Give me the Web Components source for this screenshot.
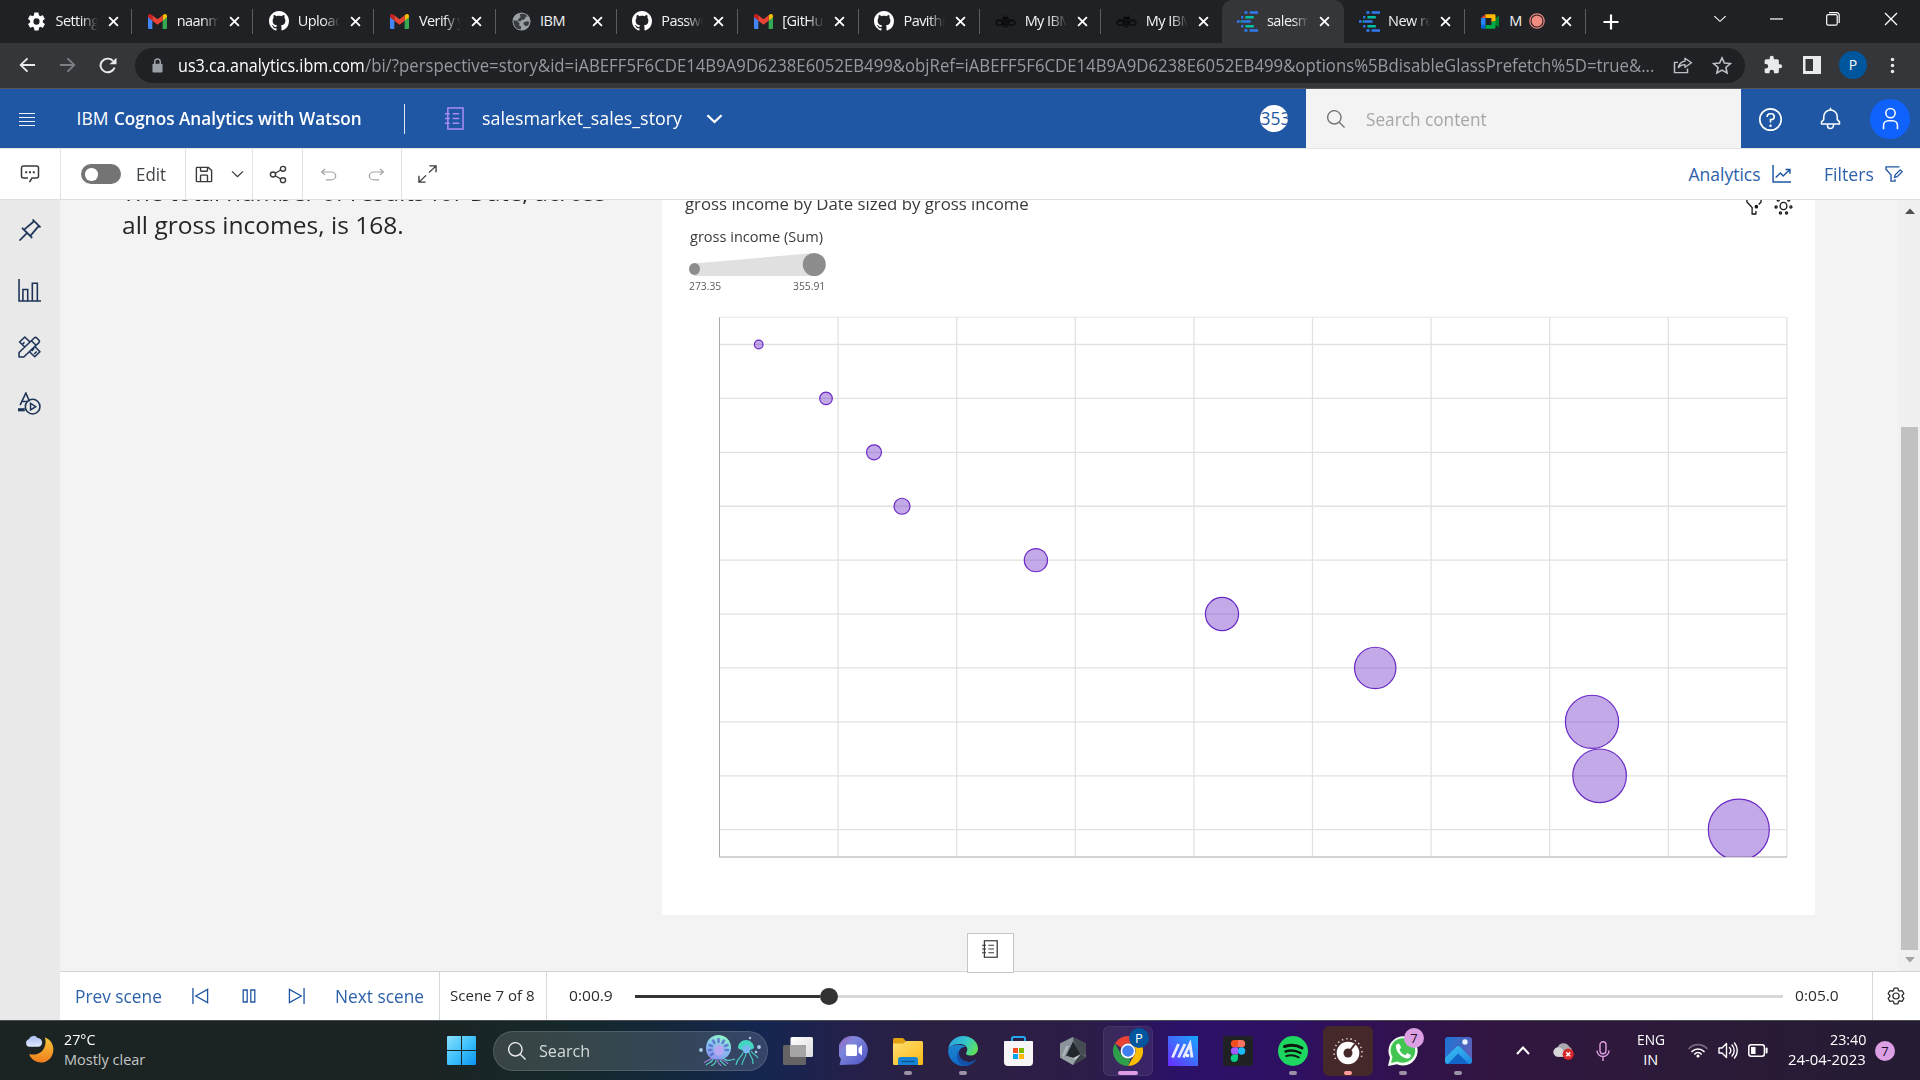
<!DOCTYPE html>
<html lang="en">
<head>
<meta charset="utf-8">
<title>salesmarket_sales_story</title>
<style>
html,body{margin:0;padding:0;width:1920px;height:1080px;overflow:hidden;background:#f3f3f3}
</style>
</head>
<body>
<app-desktop></app-desktop>
<script>
const PLEX='"Open Sans","Noto Sans",sans-serif';
const SEGOE='"Open Sans","Noto Sans",sans-serif';

const ICONS={
gear:['2 1.500 20 21','<path fill="currentColor" fill-rule="evenodd" d="M19.4 13c0-.3.1-.6.1-1s0-.7-.1-1l2.1-1.6c.2-.2.3-.4.1-.7l-2-3.4c-.1-.2-.4-.3-.6-.2l-2.5 1c-.5-.4-1.1-.7-1.7-1l-.4-2.6c0-.3-.2-.5-.5-.5h-4c-.3 0-.5.2-.5.4l-.4 2.7c-.6.2-1.1.6-1.7 1l-2.5-1c-.2-.1-.5 0-.6.2l-2 3.4c-.1.2-.1.5.1.7L4.500 11c0 .3-.1.6-.1 1s0 .7.1 1l-2.1 1.6c-.2.2-.3.4-.1.7l2 3.4c.1.2.4.3.6.2l2.5-1c.5.4 1.1.7 1.7 1l.4 2.6c0 .3.2.5.5.5h4c.3 0 .5-.2.5-.4l.4-2.7c.6-.2 1.1-.6 1.7-1l2.5 1c.2.1.5 0 .6-.2l2-3.4c.1-.2.1-.5-.1-.7zM12 15.6a3.6 3.6 0 1 1 0-7.200a3.6 3.6 0 0 1 0 7.200z"/>'],
gmail:['0 0 24 18','<path fill="#4285f4" d="M0 3v13.500C0 17.400.7 18 1.600 18H5.500V7z"/><path fill="#34a853" d="M24 3v13.500c0 .9-.7 1.500-1.600 1.500H18.500V7z"/><path fill="#fbbc04" d="M18.500 1.500V8L24 4V2.500c0-2.200-2.500-3.200-4.200-2z"/><path fill="#c5221f" d="M5.500 1.500V8L0 4V2.500C0 .3 2.500-.7 4.200.500z"/><path fill="#ea4335" d="M5.500 8V1.500L12 6.400l6.500-4.900V8L12 12.900z"/>'],
github:['0 0 16 16','<path fill="#fff" d="M8 0C3.580 0 0 3.580 0 8c0 3.540 2.290 6.530 5.470 7.590.4.070.550-.170.550-.380 0-.190-.010-.820-.010-1.490-2.010.370-2.530-.490-2.690-.940-.090-.230-.480-.940-.820-1.130-.280-.150-.680-.520-.010-.530.630-.010 1.080.580 1.230.820.720 1.210 1.870.870 2.330.660.070-.520.280-.870.510-1.070-1.780-.200-3.640-.890-3.640-3.950 0-.870.310-1.590.820-2.150-.080-.200-.360-1.020.080-2.120 0 0 .670-.210 2.200.820.640-.180 1.320-.270 2-.270s1.360.090 2 .270c1.530-1.040 2.200-.820 2.200-.820.440 1.100.160 1.920.080 2.120.510.560.820 1.270.820 2.150 0 3.070-1.870 3.750-3.650 3.950.290.250.540.730.540 1.480 0 1.070-.010 1.930-.010 2.200 0 .210.150.460.550.380A8.010 8.010 0 0 0 16 8c0-4.420-3.580-8-8-8z"/>'],
globe:['0 0 20 20','<circle cx="10" cy="10" r="9.500" fill="#9aa0a6"/><path fill="#3a3c40" d="M2 8.500l4 1.200 2 2.500-.5 2 2.300 1.300-.8 3C5 18.200 1.800 15 1.600 10zM8 2l5-.2 3.500 2.700-2 .6-1.200 2.400-3 .8-1.800 1.700-3-1L8 6.300l1-1.500zM12 11l4-1.200 2.200.8-1 3.400-2.700.9-2-1.600z"/>'],
bee:['0 0 24 20','<g fill="none" stroke="#08090a" stroke-width="1.500"><ellipse cx="5" cy="12" rx="3.800" ry="3"/><ellipse cx="19" cy="12" rx="3.800" ry="3"/></g><g fill="#08090a"><rect x="8.500" y="4" width="7" height="3" rx="1"/><rect x="2" y="7.200" width="20" height="1.500"/><rect x="8.500" y="9.500" width="7" height="2"/><rect x="8.500" y="12.500" width="7" height="2"/><rect x="9.500" y="15.500" width="5" height="2"/><path d="M9 0l2 4-1.200.2zM15 0l-2 4 1.200.2z"/></g>'],
cognos:['0 0 20 22','<g stroke-width="2.600"><path stroke="#2f7bf0" d="M7 1.500h3M12 1.500h8M4 6.500h2M0 11h2.500M5 11h8M4 16h2M7 20.500h3M12 20.500h8"/><path stroke="#00bfa5" d="M8 6.500h8M8 16h8M3.500 11h1.200"/></g>'],
meet:['0 0 20 20','<path fill="#00832d" d="M14 7l5-4v14l-5-4z"/><path fill="#0066da" d="M1 14h4.500v4.500H2.500A1.500 1.500 0 0 1 1 17z"/><path fill="#2684fc" d="M1 6h4.500v8H1z"/><path fill="#e94235" d="M5.500 1.500V6H1z"/><path fill="#ffba00" d="M5.500 1.500H14A1.500 1.500 0 0 1 15.500 3v6l-4 1.500V6h-6z"/><path fill="#00ac47" d="M5.500 14h6v-3.500l4-1V17a1.500 1.500 0 0 1-1.500 1.500H5.500z"/>'],
rec:['0 0 16 16','<circle cx="8" cy="8" r="7.200" fill="none" stroke="#f28b82" stroke-width="1.200"/><circle cx="8" cy="8" r="5.500" fill="#f28b82"/>'],
x:['0 0 12 12','<path d="M1.200 1.200l9.600 9.600M10.800 1.200l-9.600 9.600" stroke="currentColor" stroke-width="2"/>'],
xthin:['0 0 14 14','<path d="M1 1l12 12M13 1L1 13" stroke="currentColor" stroke-width="1.300"/>'],
plus:['0 0 16 16','<path d="M8 .5v15M.5 8h15" stroke="currentColor" stroke-width="2.200"/>'],
vthin:['0 0 16 10','<path d="M1.500 1.500L8 8l6.500-6.500" fill="none" stroke="currentColor" stroke-width="1.200"/>'],
min:['0 0 14 14','<path d="M0 7.500h14" stroke="currentColor" stroke-width="1.300"/>'],
max:['0 0 14 14','<rect x=".7" y="2.700" width="10.500" height="10.500" rx="1.500" fill="none" stroke="currentColor" stroke-width="1.200"/><path d="M3 .7h7.800a2.400 2.400 0 0 1 2.400 2.400V11" fill="none" stroke="currentColor" stroke-width="1.200"/>'],
back:['0 0 18 18','<path d="M17 9H2M9 1.500L1.800 9 9 16.500" fill="none" stroke="currentColor" stroke-width="2"/>'],
fwd:['0 0 18 18','<path d="M1 9h15M9 1.500L16.200 9 9 16.500" fill="none" stroke="currentColor" stroke-width="2"/>'],
reload:['0 0 18 18','<path d="M15.600 11.200A7.200 7.200 0 1 1 14 4" fill="none" stroke="currentColor" stroke-width="2"/><path d="M17.500.800v7h-7z" fill="currentColor"/>'],
lock:['0 0 12 16','<rect x=".5" y="6" width="11" height="9.500" rx="1.200" fill="#9aa0a6"/><path d="M3 7V4a3 3 0 0 1 6 0v3" fill="none" stroke="#9aa0a6" stroke-width="1.600"/>'],
pageshare:['0 0 20 20','<path d="M5 7H1.500v11.500h13V14" fill="none" stroke="currentColor" stroke-width="1.500"/><path d="M12 2.500l6.500 5L12 12.500V9.700c-3 0-5 .8-6.700 3.300.6-4 3-6.800 6.700-7.400z" fill="none" stroke="currentColor" stroke-width="1.400" stroke-linejoin="round"/>'],
star:['0 0 20 20','<path d="M10 2l2.400 5.400 5.900.6-4.400 4 1.200 5.800L10 14.800l-5.100 3L6.100 12 1.700 8l5.900-.6z" fill="none" stroke="currentColor" stroke-width="1.600"/>'],
puzzle:['0 0 24 24','<path fill="currentColor" d="M20.500 11H19V7a2 2 0 0 0-2-2h-4V3.500a2.500 2.500 0 0 0-5 0V5H4a2 2 0 0 0-2 2v3.800h1.500a2.700 2.700 0 0 1 0 5.400H2V20c0 1.100.9 2 2 2h3.800v-1.500a2.700 2.700 0 0 1 5.400 0V22H17a2 2 0 0 0 2-2v-4h1.500a2.500 2.500 0 0 0 0-5z"/>'],
panel:['0 0 18 18','<path fill="currentColor" fill-rule="evenodd" d="M0 0h18v18H0zM2.500 3v12H10V3z"/>'],
dots:['0 0 6 20','<g fill="currentColor"><circle cx="3" cy="3" r="2.100"/><circle cx="3" cy="10" r="2.100"/><circle cx="3" cy="17" r="2.100"/></g>'],
menu:['0 0 16 14','<path d="M0 1.500h16M0 5.500h16M0 9.500h16M0 13.500h16" stroke="#f0f4fa" stroke-width="1.100"/>'],
book:['0 0 20 24','<g fill="none" stroke="currentColor" stroke-width="1.600"><rect x="3" y="1" width="16" height="22"/><path d="M0 7h5M0 12h5M0 17h5M8 7h7M8 12h7M8 17h7"/></g>'],
chev:['5 9 22 14','<path fill="currentColor" d="M16 22 6 12l1.400-1.400 8.600 8.600 8.600-8.600L26 12z"/>'],
chevb:['0 0 18 12','<path d="M1.500 1.500L9 9.500l7.500-8" fill="none" stroke="currentColor" stroke-width="2.400"/>'],
search:['2 2 27 27','<path fill="currentColor" d="M29 27.586l-7.552-7.552a11.018 11.018 0 1 0-1.414 1.414L27.586 29zM4 13a9 9 0 1 1 9 9 9.010 9.010 0 0 1-9-9z"/>'],
help:['2 2 28 28','<circle cx="16" cy="16" r="13" fill="none" stroke="currentColor" stroke-width="2"/><circle cx="16" cy="23.500" r="1.500" fill="currentColor"/><path fill="currentColor" d="M17 8h-1.500a4.490 4.490 0 0 0-4.500 4.500v.5h2v-.5a2.500 2.500 0 0 1 2.500-2.500H17a2.500 2.500 0 0 1 0 5h-2v4.500h2V17a4.500 4.500 0 0 0 0-9z"/>'],
bell:['2 0 28 31','<path fill="currentColor" d="M28.707 19.293L26 16.586V13a10.014 10.014 0 0 0-9-9.950V1h-2v2.050A10.014 10.014 0 0 0 6 13v3.586l-2.707 2.707A1 1 0 0 0 3 20v3a1 1 0 0 0 1 1h7v.777a5.152 5.152 0 0 0 4.500 5.199A5.006 5.006 0 0 0 21 25v-1h7a1 1 0 0 0 1-1v-3a1 1 0 0 0-.293-.707zM19 25a3 3 0 0 1-6 0v-1h6zm8-3H5v-1.586l2.707-2.707A1 1 0 0 0 8 17v-4a8 8 0 0 1 16 0v4a1 1 0 0 0 .293.707L27 20.414z"/>'],
user:['5 1 22 30','<path fill="currentColor" d="M16 4a5 5 0 1 1-5 5 5 5 0 0 1 5-5m0-2a7 7 0 1 0 7 7 7 7 0 0 0-7-7zM26 30h-2v-5a5 5 0 0 0-5-5h-6a5 5 0 0 0-5 5v5H6v-5a7 7 0 0 1 7-7h6a7 7 0 0 1 7 7z"/>'],
chat:['0 0 20 18','<path d="M9.500 17l2.500-4h4.500a2 2 0 0 0 2-2V3a2 2 0 0 0-2-2h-13a2 2 0 0 0-2 2v8a2 2 0 0 0 2 2H8" fill="none" stroke="currentColor" stroke-width="1.500"/><path d="M5.200 6.200h2v2h-2zM9 6.200h2v2H9zM12.800 6.200h2v2h-2z" fill="currentColor"/>'],
save:['3 3 26 26','<path fill="currentColor" d="M27.710 9.290l-5-5A1 1 0 0 0 22 4H6a2 2 0 0 0-2 2v20a2 2 0 0 0 2 2h20a2 2 0 0 0 2-2V10a1 1 0 0 0-.290-.710zM12 6h8v4h-8zm8 20h-8v-8h8zm2 0v-8a2 2 0 0 0-2-2h-8a2 2 0 0 0-2 2v8H6V6h4v4a2 2 0 0 0 2 2h8a2 2 0 0 0 2-2V6.410l4 4V26z"/>'],
share:['0 0 18 20','<g fill="none" stroke="currentColor" stroke-width="1.400"><circle cx="4" cy="10" r="2.600"/><circle cx="14" cy="4" r="2.600"/><circle cx="14" cy="16" r="2.600"/><path d="M6.200 8.700l5.600-3.400M6.200 11.300l5.600 3.400"/></g>'],
undo:['3 4 26 23','<path fill="currentColor" d="M20 10H7.815l3.587-3.586L10 5l-6 6 6 6 1.402-1.415L7.818 12H20a6 6 0 0 1 0 12h-8v2h8a8 8 0 0 0 0-16z"/>'],
redo:['3 4 26 23','<path transform="translate(32 0) scale(-1 1)" fill="currentColor" d="M20 10H7.815l3.587-3.586L10 5l-6 6 6 6 1.402-1.415L7.818 12H20a6 6 0 0 1 0 12h-8v2h8a8 8 0 0 0 0-16z"/>'],
expand:['0 0 20 20','<path d="M12 1h7v7M8 19H1v-7M19 1l-7.500 7.500M1 19l7.500-7.500" fill="none" stroke="currentColor" stroke-width="1.400"/>'],
line:['0 0 18 18','<path d="M1 0v17h17M3.500 12.500L8 8l2.500 3L17 4.500M12.800 4.500H17v4.200" fill="none" stroke="currentColor" stroke-width="1.400"/>'],
filter:['0 0 18 17','<path d="M14.500 1H1v2.500l5 6V16h4v-2" fill="none" stroke="currentColor" stroke-width="1.400"/><path d="M9.500 12l.7-2.700 5-5.300 2 2-5 5.300z" fill="none" stroke="currentColor" stroke-width="1.300"/>'],
fdot:['0 0 17 18','<path d="M1 0v5l5.500 5.500V17h4v-3M13.500 7.500L16 5V0" fill="none" stroke="currentColor" stroke-width="1.400"/><circle cx="11" cy="9.700" r="1.900" fill="currentColor"/>'],
burst:['0 0 20 20','<g fill="none" stroke="currentColor"><circle cx="10" cy="10" r="3.600" stroke-width="1.400"/><g stroke-width="1.400"><circle cx="4.500" cy="4" r="1.100"/><circle cx="15.500" cy="4" r="1.100"/><circle cx="2.200" cy="11" r="1.100"/><circle cx="17.800" cy="11" r="1.100"/><circle cx="6.800" cy="17" r="1.100"/><circle cx="13.200" cy="17" r="1.100"/></g></g>'],
pin:['2 2 28 28','<path fill="currentColor" stroke="currentColor" stroke-width=".3" d="M28.586 13.314L30 11.900 20 2l-1.314 1.415 1.186 1.186L8.380 14.322l-1.716-1.715L5.250 14l5.657 5.677L2 28.583 3.410 30l8.911-8.909L18 26.748l1.393-1.414-1.716-1.716 9.724-11.490zM16.260 22.200L9.800 15.740 21.285 6.016l4.700 4.700z"/>'],
bars:['0 0 22 22','<path d="M1 0v21h21M4.700 21V10h4.600v11M13.700 21V4h4.800v17" fill="none" stroke="currentColor" stroke-width="1.500"/>'],
tools:['0 0 22 22','<g fill="none" stroke="currentColor" stroke-width="1.500" stroke-linejoin="round"><path d="M1 21v-4.500L15.500 2a1.800 1.800 0 0 1 2.500 0L20 4.200a1.800 1.800 0 0 1 0 2.400L5.500 21zM12.800 4.800l4.500 4.500M6.500 11L1.500 6 6.500 1l5 5M4 8.500L6.200 6.200M16.500 11l4.500 4.800-5 5-5-5M13 15l2.500-2.500M15.500 18l2.500-2.500"/></g>'],
anim:['0 0 22 22','<path d="M2 12.500L7.500 1 11 9M4.500 9h5" fill="none" stroke="currentColor" stroke-width="1.500"/><path d="M0 15.500h6.500v3H0z" fill="currentColor"/><circle cx="14" cy="14" r="7" fill="none" stroke="currentColor" stroke-width="1.500"/><path d="M12 10.800v6.400l5-3.200z" fill="none" stroke="currentColor" stroke-width="1.400"/>'],
prev:['0 0 18 17','<path d="M1 0v17M16.500 1.500v14L4 8.500z" fill="none" stroke="currentColor" stroke-width="1.400"/>'],
next:['0 0 18 17','<path d="M17 0v17M1.500 1.500v14L14 8.500z" fill="none" stroke="currentColor" stroke-width="1.400"/>'],
pause:['0 0 14 14','<path d="M1.200 1h4v12h-4zM8.800 1h4v12h-4z" fill="none" stroke="currentColor" stroke-width="1.300"/>'],
settings:['1.500 1 29 30','<circle cx="16" cy="16" r="5" fill="none" stroke="currentColor" stroke-width="2"/><path fill="currentColor" d="M27 16.760V16v-.770l1.920-1.680A2 2 0 0 0 29.300 11l-2.360-4a2 2 0 0 0-1.730-1 2 2 0 0 0-.640.100l-2.430.820a11.350 11.350 0 0 0-1.310-.750l-.510-2.520a2 2 0 0 0-2-1.610h-4.680a2 2 0 0 0-2 1.610l-.510 2.520a11.480 11.480 0 0 0-1.320.750L7.430 6.060A2 2 0 0 0 6.790 6a2 2 0 0 0-1.730 1L2.700 11a2 2 0 0 0 .410 2.510L5 15.240v1.530l-1.890 1.680A2 2 0 0 0 2.700 21l2.360 4a2 2 0 0 0 1.730 1 2 2 0 0 0 .640-.100l2.430-.820a11.350 11.350 0 0 0 1.310.750l.510 2.520a2 2 0 0 0 2 1.610h4.720a2 2 0 0 0 2-1.610l.510-2.520a11.480 11.480 0 0 0 1.320-.750l2.420.820a2 2 0 0 0 .640.100 2 2 0 0 0 1.730-1l2.280-4a2 2 0 0 0-.410-2.510zM25.210 24l-3.430-1.160a8.860 8.860 0 0 1-2.710 1.570L18.360 28h-4.720l-.710-3.550a9.360 9.360 0 0 1-2.700-1.570L6.790 24l-2.360-4 2.720-2.400a8.900 8.900 0 0 1 0-3.130L4.430 12l2.360-4 3.430 1.160a8.860 8.860 0 0 1 2.710-1.570L13.640 4h4.720l.710 3.550a9.360 9.360 0 0 1 2.700 1.570L25.210 8l2.360 4-2.720 2.400a8.900 8.900 0 0 1 0 3.130L27.570 20z"/>'],
up:['0 0 10 6','<path d="M0 6l5-5.500L10 6z" fill="#505050"/>'],
down:['0 0 10 6','<path d="M0 0l5 5.500L10 0z" fill="#a3a3a3"/>'],
moon:['0 0 30 30','<defs><linearGradient id="m" x1="0" y1="0" x2="0" y2="1"><stop offset="0" stop-color="#f7c63a"/><stop offset="1" stop-color="#f07d1e"/></linearGradient><linearGradient id="c" x1="0" y1="0" x2="0" y2="1"><stop offset="0" stop-color="#a9bdf0"/><stop offset="1" stop-color="#dfe8ff"/></linearGradient></defs><path fill="url(#m)" d="M20.500 2.500C27 4.500 30.500 11 29 18 27.500 25.500 20 30 13 28 8.500 26.600 5.500 23.500 4.300 19.600 10 21.500 16.500 19.500 19.500 14 21.500 10.300 21.800 6 20.500 2.500z"/><path fill="url(#c)" d="M4.500 12.200a4 4 0 0 1-.5-7.800A5 5 0 0 1 13 3.200a4.500 4.500 0 0 1 4.700 4.500c0 2.500-1.700 4.500-4.200 4.500z"/>'],
win:['0 0 29 29','<defs><linearGradient id="w" x1="0" y1="0" x2="1" y2="1"><stop offset="0" stop-color="#8be0fd"/><stop offset=".5" stop-color="#3fc1fb"/><stop offset="1" stop-color="#0a94f0"/></linearGradient></defs><path fill="url(#w)" d="M1 0h13v14H0V1a1 1 0 0 1 1-1zM15 0h13a1 1 0 0 1 1 1v13H15zM0 15h14v14H1a1 1 0 0 1-1-1zM15 15h14v13a1 1 0 0 1-1 1H15z"/>'],
jelly:['0 0 62 31','<defs><linearGradient id="j" x1=".2" y1="1" x2=".6" y2="0"><stop offset="0" stop-color="#8f8ff0"/><stop offset=".55" stop-color="#86c4ee"/><stop offset="1" stop-color="#8ff8c8"/></linearGradient></defs><path d="M7 13C7 5 13 0 19.500 0S32 5 32 12.500c0 6-4 10.500-9 12h-7C10 23.500 7 19 7 13z" fill="url(#j)"/><g stroke="#5d6fd0" stroke-width="2.600" stroke-linecap="round" opacity=".85"><path d="M19.500 7V4M15.500 8l-1.500-2.500M23.500 8l1.500-2.500M13 11l-2.500-1M26 11l2.500-1M12.500 15h-2.500M26.500 15h2.500M14 18.500l-2 1.500"/></g><ellipse cx="20" cy="15" rx="5" ry="5.500" fill="#b7a8f2"/><g fill="none" stroke="#57d3c7" stroke-width="1.100"><path d="M14 24c-1 4-4 3-7 6M17 25c0 3-3 5-5 6M21 25c1 3 4 3 6 6M24 23c3 3 6 3 12 1"/></g><g fill="none" stroke="#9b83e0" stroke-width="1.100"><path d="M19 25c-1 3 2 4 3 6M13 23c-3 3-6 2-8 5M22 24c2 3 5 1 7 5"/></g><path d="M39 13c0-5 4-8 8-8s8 3 8 8c-2 2-4 1-5 3-2-1-4-1-6 0-1-2-4-1-5-3z" fill="#43d6c0"/><path d="M43 13c2-4 6-4 9 0l-2 5h-5z" fill="#76b7ef"/><g fill="none" stroke="#45cabd" stroke-width="1.200"><path d="M44 17c0 5-6 5-7 13M47 18c0 5-4 7-4 12M50 17c1 5 5 6 4 12M52 16c2 4 5 3 7 7"/></g><g fill="#a8c9e8"><circle cx="2" cy="15" r="1.900"/><circle cx="51" cy="3" r="1.200"/><circle cx="60" cy="12" r="1.900"/><circle cx="57" cy="17" r="1.300"/></g>'],
task:['0 0 30 28','<defs><linearGradient id="t" x1="0" y1="0" x2="1" y2="1"><stop offset="0" stop-color="#fff"/><stop offset="1" stop-color="#dcdcdc"/></linearGradient></defs><rect x="0" y="8" width="23" height="20" rx="1.500" fill="#656363"/><rect x="7.500" y="0" width="22.500" height="20" rx="1.500" fill="url(#t)"/><path d="M7.500 8H23v12H9a1.500 1.500 0 0 1-1.500-1.500z" fill="#a5a5a6"/>'],
teams:['0 0 29 29','<defs><linearGradient id="tc" x1="0" y1="0" x2="1" y2="1"><stop offset="0" stop-color="#9a5fb5"/><stop offset=".35" stop-color="#7d86dc"/><stop offset="1" stop-color="#4d52c4"/></linearGradient></defs><path fill="url(#tc)" d="M14.500 0A14.300 14.300 0 0 1 14.500 28.600L1.500 29a1 1 0 0 1-.7-1.600L2 23A14.300 14.300 0 0 1 14.500 0z"/><rect x="7" y="8.500" width="11" height="11.500" rx="1.500" fill="#fff"/><path fill="#fff" d="M19.500 12l3.500-3v10.500l-3.500-3z"/>'],
folder:['0 0 30 28','<defs><linearGradient id="f" x1="0" y1="0" x2="1" y2="1"><stop offset="0" stop-color="#ffdf70"/><stop offset="1" stop-color="#fbb916"/></linearGradient></defs><path fill="#e1a00f" d="M0 2.500A1.500 1.500 0 0 1 1.500 1H10L12.500 3.500V8H0z"/><path fill="url(#f)" d="M0 6.500h10.500L13 4h15.500A1.500 1.500 0 0 1 30 5.500v21a1.500 1.500 0 0 1-1.500 1.500h-27A1.500 1.500 0 0 1 0 26.500z"/><path fill="#1683d3" d="M5 28v-5.500A2.500 2.500 0 0 1 7.500 20h15a2.500 2.500 0 0 1 2.500 2.500V28z"/><path d="M8.500 24.500h13" stroke="#0a548f" stroke-width="1.300"/>'],
edge:['0 0 30 30','<defs><linearGradient id="e1" x1="0" y1=".2" x2="1" y2=".6"><stop offset="0" stop-color="#2a9fe6"/><stop offset=".55" stop-color="#35c8c8"/><stop offset="1" stop-color="#5fe05a"/></linearGradient><linearGradient id="e2" x1="0" y1="0" x2="0" y2="1"><stop offset="0" stop-color="#1b87d2"/><stop offset="1" stop-color="#1168c4"/></linearGradient></defs><path fill="url(#e1)" d="M.3 13C1.300 5.500 7.500 0 15 0c8.500 0 15 6 15 12.500 0 4.300-3.300 7-7.200 7-3.400 0-4.800-1-4.800-2s1.300-1.500 1.300-4c0-3.400-3.300-5.500-7.300-5.500C6.500 8 2 10 .3 13z"/><path fill="url(#e2)" d="M.1 14C1 11 5 8.700 10.500 8.700c3.500 0 6 .8 7.300 2.300-3.800-.5-7 2.300-7 6 0 5 4.500 9 9.700 9 2.500 0 4.700-.8 6.500-2.100C24.500 27.600 20 30 15.300 30 6.500 30-.3 22.500.1 14z"/><path fill="#1351a8" d="M10.800 14.500c-1.300 5.800 3.700 11.500 9.700 11.500 2.700 0 5-.9 6.800-2.300.5-.3.900.1.500.600C25.300 28 21 30.200 16.500 30 9.500 28 6.800 20 10.800 14.500z"/>'],
store:['0 0 29 30','<path d="M8 6V2.500A1.500 1.500 0 0 1 9.500 1h10A1.500 1.500 0 0 1 21 2.500V6" fill="none" stroke="#22a7ee" stroke-width="2"/><path fill="#f6f6f6" d="M1 5h27a1 1 0 0 1 1 1v20a4 4 0 0 1-4 4H4a4 4 0 0 1-4-4V6a1 1 0 0 1 1-1z"/><path fill="#f25022" d="M9 12h5v5H9z"/><path fill="#7fba00" d="M15 12h5v5h-5z"/><path fill="#00a4ef" d="M9 18h5v5H9z"/><path fill="#ffb900" d="M15 18h5v5h-5z"/>'],
gem:['0 0 26 28','<path fill="#5e666c" d="M13 0l13 6.500V20.500L13 28 0 20.500V6.500z"/><path fill="#8b949a" d="M0 6.500L13 0v6L4 21 0 20.500z"/><path fill="#454d53" d="M13 0l13 6.500V18l-7-1z"/><path fill="#aeb6bb" d="M9 9L4 20l-2-1L6 9z"/><path fill="#23282d" d="M13 4.500l7.500 13L13 21l-6.500-2.500z"/><path fill="#c3c9cd" d="M7 19.500l6.500 1.500 7.500-4-5 6z"/><path fill="#99a1a7" d="M0 20.500L7 19l9 4-3 5z"/><path fill="#3c4348" d="M21 17l5 3.500L13 28l3-5z"/>'],
chrome:['0 0 30 30','<path fill="#ea4335" d="M15 0a15 15 0 0 1 13 7.500H15a7.500 7.500 0 0 0-6.700 4.200L2 7.500A15 15 0 0 1 15 0z"/><path fill="#fbbc04" d="M28 7.500A15 15 0 0 1 15 30l6.500-11.200A7.500 7.500 0 0 0 15 7.500z"/><path fill="#2e9e4a" d="M2 7.500l6.500 11.300A7.500 7.500 0 0 0 18 21.900L15 30A15 15 0 0 1 2 7.500z"/><circle cx="15" cy="15" r="7.400" fill="#fff"/><circle cx="15" cy="15" r="5.800" fill="#3f7ff0"/>'],
ma:['0 0 30 30','<defs><linearGradient id="a" x1="0" y1="1" x2="1" y2="0"><stop offset="0" stop-color="#6a2cff"/><stop offset="1" stop-color="#16a8ff"/></linearGradient></defs><rect width="30" height="30" fill="url(#a)"/><path d="M4.500 21.500L10.500 8M10.500 21.500L17 8M15.500 21.500L22 8l2 13.500" stroke="#e8eaff" stroke-width="2.800" fill="none"/><circle cx="19.500" cy="19.500" r="1.800" fill="#fff"/>'],
figma:['0 0 30 30','<rect width="30" height="30" rx="2" fill="#202124"/><path fill="#f24e1e" d="M11.500 4H15v7.300h-3.500a3.650 3.650 0 0 1 0-7.300z"/><path fill="#ff7262" d="M15 4h3.500a3.650 3.650 0 0 1 0 7.300H15z"/><path fill="#a259ff" d="M11.500 11.300H15v7.300h-3.500a3.650 3.650 0 0 1 0-7.300z"/><circle cx="18.600" cy="15" r="3.650" fill="#1abcfe"/><path fill="#0acf83" d="M11.500 18.600H15v3.700a3.650 3.650 0 1 1-3.500-3.700z"/>'],
spotify:['0 0 30 30','<circle cx="15" cy="15" r="15" fill="#1ed760"/><g fill="none" stroke="#0d1a10" stroke-linecap="round"><path stroke-width="3" d="M6.500 10.500c6-1.800 12.500-1.300 17.500 1.500"/><path stroke-width="2.500" d="M7.500 15.500c5-1.500 10.500-1 15 1.500"/><path stroke-width="2" d="M8.300 20c4-1.200 8.500-.8 12.500 1.300"/></g>'],
timer:['0 0 30 30','<path d="M2.500 23A14 14 0 1 1 27.500 23" fill="none" stroke="#d9d2d2" stroke-width="1.600" stroke-dasharray="1.400 3"/><circle cx="15" cy="17" r="11.300" fill="#fff"/><circle cx="15" cy="17" r="4.500" fill="#45282a"/><path d="M15 17l7-9" stroke="#45282a" stroke-width="2"/><circle cx="15" cy="17" r="2" fill="#45282a"/>'],
whatsapp:['0 0 30 30','<path fill="#f4fff4" d="M0 30l2-8.500A14.600 14.600 0 1 1 9 28.200z"/><path fill="#43c553" d="M3 27l1.500-6A12.300 12.300 0 1 1 9.500 25.500z"/><path fill="#fff" d="M10.200 7.500c-1.500.3-2.500 2-2.200 4 .8 5 5 9.500 10.500 11 2 .4 4.300-.8 4.300-3.200 0-.5-3.300-2.200-3.800-2l-1.600 2c-2.600-.8-5-3-6-5.600l1.500-1.700c.2-.6-1.100-4.400-2.700-4.500z"/>'],
photos:['0 0 27 27','<defs><linearGradient id="p" x1="0" y1="0" x2="1" y2=".3"><stop offset="0" stop-color="#1b76d4"/><stop offset="1" stop-color="#5861ba"/></linearGradient><linearGradient id="p2" x1="0" y1="0" x2="1" y2="1"><stop offset="0" stop-color="#3cc3f5"/><stop offset="1" stop-color="#1d86e0"/></linearGradient></defs><rect width="27" height="27" rx="3" fill="url(#p)"/><path fill="url(#p2)" d="M0 21L11.500 9.800a2.500 2.500 0 0 1 3.500 0L27 22v2a3 3 0 0 1-3 3H3a3 3 0 0 1-3-3z"/><path fill="#1266c9" d="M3 27L13 16.500 24 27z"/><circle cx="20" cy="5" r="2.700" fill="#eaf4ff"/>'],
caret:['0 0 14 9','<path d="M1 8l6-6.500L13 8" fill="none" stroke="currentColor" stroke-width="2"/>'],
cloud:['0 0 20 17','<path fill="#a9a9ae" d="M5 14a4.500 4.500 0 0 1-.5-9A6 6 0 0 1 15.500 4.500 4 4 0 0 1 17 11L14 14z"/><path fill="#d7d7da" d="M5 14a4.500 4.500 0 1 1 3-8l6 6v2z"/><circle cx="14.500" cy="11.500" r="5.300" fill="#d8282c"/><path d="M12.600 9.600l3.800 3.800M16.400 9.600l-3.800 3.800" stroke="#fff" stroke-width="1.400"/>'],
mic:['0 0 14 20','<g fill="none" stroke="#dc9fe0" stroke-width="1.400"><rect x="4" y=".8" width="6" height="12" rx="3"/><path d="M1 9.500a6 6 0 0 0 12 0M7 15.500V20"/></g>'],
wifi:['0 0 20 15','<g fill="none" stroke="#fff" stroke-width="1.700" stroke-linecap="round"><path opacity=".35" d="M1 5.500a12.500 12.500 0 0 1 18 0"/><path d="M4 8.500a8.500 8.500 0 0 1 12 0M6.800 11a4.600 4.600 0 0 1 6.400 0"/></g><circle cx="10" cy="13" r="1.600" fill="#fff"/>'],
vol:['0 0 20 17','<g fill="none" stroke="#fff" stroke-width="1.400" stroke-linejoin="round" stroke-linecap="round"><path d="M1 6h3l4.500-4.500v14L4 11H1zM11.500 5.500a4.500 4.500 0 0 1 0 6M14 3a8 8 0 0 1 0 11M16.500 1a11.500 11.500 0 0 1 0 15"/></g>'],
batt:['0 0 20 13','<rect x=".8" y=".8" width="15.600" height="11.400" rx="2.500" fill="none" stroke="#fff" stroke-width="1.500"/><rect x="3" y="3" width="4.500" height="7" fill="#fff"/><path d="M18.600 4.500v4" stroke="#fff" stroke-width="2" stroke-linecap="round"/>']
};

function define(name,css,html){
  const t=document.createElement('template');
  t.innerHTML='<style>:host{box-sizing:border-box}*{box-sizing:border-box}'+css+'</style>'+html;
  customElements.define(name,class extends HTMLElement{
    connectedCallback(){
      if(this.shadowRoot)return;
      this.attachShadow({mode:'open'}).appendChild(document.importNode(t.content,true));
    }
  });
}

/* Icon drawn from the registry: name, w, h */
customElements.define('ui-icon',class extends HTMLElement{
  connectedCallback(){
    if(this.shadowRoot)return;
    const [vb,body]=ICONS[this.getAttribute('name')];
    const w=this.getAttribute('w'),h=this.getAttribute('h')||w;
    this.attachShadow({mode:'open'}).innerHTML=`<style>:host{display:block;flex:none;width:${w}px;height:${h}px}svg{display:block}</style><svg width="${w}" height="${h}" viewBox="${vb}" preserveAspectRatio="none">${body}</svg>`;
  }
});

/* Single line of text set to an exact advance width */
customElements.define('fit-text',class extends HTMLElement{
  connectedCallback(){
    if(this.shadowRoot)return;
    const w=+this.getAttribute('w'),s=this.getAttribute('s')||16;
    const fam=this.hasAttribute('ui')?SEGOE:PLEX;
    this.attachShadow({mode:'open'}).innerHTML=`<style>:host{display:block;flex:none;width:${w}px;white-space:nowrap;font-family:${fam};font-size:${s}px;line-height:1.3}span{display:inline-block;transform-origin:0 50%;white-space:pre}</style><span><slot></slot></span>`;
    const sp=this.shadowRoot.querySelector('span');
    const fit=()=>{const n=sp.offsetWidth;if(n)sp.style.transform=`scaleX(${w/n})`};
    requestAnimationFrame(fit);
    fit();
  }
});

define('browser-tab',`:host{display:flex;align-items:center;width:121.150px;height:43px;padding:0 0 1px 15.500px;flex:none;color:#e8eaed}
:host([active]){background:#35363a;border-radius:10px 10px 0 0}
.ic{width:20px;display:flex;justify-content:center;margin-right:9px}
.t{width:42px;height:24px;overflow:hidden;white-space:nowrap;font:14.500px/23px ${SEGOE};letter-spacing:-.55px;color:#f1f3f4;-webkit-mask-image:linear-gradient(90deg,#000 60%,transparent);mask-image:linear-gradient(90deg,#000 60%,transparent);display:flex;align-items:center;margin-top:-1px}
:host([full]) .t{-webkit-mask-image:none;mask-image:none}
.c{margin-left:10px;color:#fff}
.s{width:1px;height:25px;background:#5b5d60;margin-left:auto}
:host([nosep]) .s{display:none}`,
`<div class="ic"><slot name="icon"></slot></div><div class="t"><slot></slot></div><ui-icon class="c" name="x" w="11" h="11"></ui-icon><div class="s"></div>`);

const TABS=[['gear',17,19,'Setting'],['gmail',19,15,'naanm'],['github',20,20,'Upload'],['gmail',19,15,'Verify y'],['globe',19,19,'IBM','full'],['github',20,20,'Passwo'],['gmail',19,15,'[GitHub'],['github',20,20,'Pavithr'],['bee',21,15,'My IBM'],['bee',21,15,'My IBM','nosep'],['cognos',21,21,'salesm','active nosep'],['cognos',21,21,'New re'],['meet',20,17,'M','full']];
define('browser-tabs',`:host{display:flex;height:43px;background:#202124;padding-left:11px;align-items:center;color:#fff}.g{flex:1}ui-icon{color:#fff}`,
TABS.map(t=>`<browser-tab ${t[4]||''}><ui-icon slot="icon" name="${t[0]}" w="${t[1]}" h="${t[2]}"></ui-icon>${t[3]}${t[0]=='meet'?'<ui-icon style="margin-left:7px" name="rec" w="16" h="16"></ui-icon>':''}</browser-tab>`).join('')+
`<ui-icon name="plus" w="16" h="16" style="margin-left:17px"></ui-icon><div class="g"></div>
<ui-icon name="vthin" w="14" h="8" style="margin:-6px 43px 0 0"></ui-icon><ui-icon name="min" w="13" h="13" style="margin:-6px 43px 0 0"></ui-icon><ui-icon name="max" w="14" h="14" style="margin:-6px 44px 0 0"></ui-icon><ui-icon name="xthin" w="14" h="14" style="margin:-6px 22px 0 0"></ui-icon>`);

define('address-bar',`:host{display:flex;height:46px;background:#35363a;border-bottom:1px solid #55565a;align-items:center;padding:0 0 1px 19px;color:#e8eaed}
.pill{width:1610px;flex:none;height:35px;border-radius:18px;background:#202124;margin-left:18px;display:flex;align-items:center;padding-left:16.500px;color:#bdc1c6}
.av{width:28px;height:28px;flex:none;border-radius:50%;background:#00569c;display:flex;align-items:center;justify-content:center;color:#fff;font:14px/1 ${SEGOE};margin:0 0 0 18px}
.h{color:#fff}.p{color:#96999d}`,
`<ui-icon name="back" w="17" h="16"></ui-icon><ui-icon name="fwd" w="17" h="16" style="margin-left:23px;color:#7d7f83"></ui-icon><ui-icon name="reload" w="18" h="17" style="margin-left:23px"></ui-icon>
<div class="pill"><ui-icon name="lock" w="11" h="15"></ui-icon><fit-text class="h" ui w="187" s="17.500" style="margin-left:15px">us3.ca.analytics.ibm.com</fit-text><fit-text class="p" ui w="1289" s="17.500">/bi/?perspective=story&amp;id=iABEFF5F6CDE14B9A9D6238E6052EB499&amp;objRef=iABEFF5F6CDE14B9A9D6238E6052EB499&amp;options%5BdisableGlassPrefetch%5D=true&amp;...</fit-text>
<ui-icon name="pageshare" w="20" h="18" style="margin-left:19.500px"></ui-icon><ui-icon name="star" w="20" h="19" style="margin-left:19px"></ui-icon></div>
<ui-icon name="puzzle" w="20" h="20" style="margin-left:18px"></ui-icon><ui-icon name="panel" w="18" h="18" style="margin-left:20px"></ui-icon><div class="av">P</div><ui-icon name="dots" w="5" h="17" style="margin-left:23px"></ui-icon>`);

define('app-header',`:host{display:flex;height:60px;background:#1f57a4;align-items:center;padding:0 0 0 19px;color:#fff;border-bottom:1px solid #e4e4e4}
.d{width:1px;height:30px;flex:none;background:#dfe8f5;margin-left:42px}
.b{width:28px;height:27px;border-radius:50%;background:#fff;overflow:hidden;margin-left:537px;display:flex;align-items:center;color:#1f57a4;padding-left:1px;flex:none}
.s{width:435px;height:59px;flex:none;background:#f3f3f3;color:#727272;display:flex;align-items:center;padding-left:21px;margin-left:18px}
.u{width:40px;height:40px;flex:none;border-radius:50%;background:#0f62fe;display:flex;align-items:center;justify-content:center;margin-left:29.500px}`,
`<ui-icon name="menu" w="16" h="14"></ui-icon><fit-text w="32" s="17.500" style="margin-left:41.500px">IBM</fit-text><fit-text w="248" s="17.500" style="margin-left:5px;font-weight:600">Cognos Analytics with Watson</fit-text><div class="d"></div>
<ui-icon name="book" w="19" h="23" style="margin-left:40px;color:#a98bf5"></ui-icon><fit-text w="200" s="17.500" style="margin:-1px 0 0 18px">salesmarket_sales_story</fit-text><ui-icon name="chevb" w="17" h="10" style="margin-left:24px"></ui-icon>
<div class="b"><fit-text w="30" s="17.500">353</fit-text></div>
<div class="s"><ui-icon name="search" w="18" h="18"></ui-icon><fit-text w="121" s="17.500" style="margin-left:21px;color:#a6a6a6;margin-top:2px">Search content</fit-text></div>
<ui-icon name="help" w="23" h="23" style="margin:1px 0 0 18px"></ui-icon><ui-icon name="bell" w="21" h="23" style="margin-left:38px"></ui-icon><div class="u"><ui-icon name="user" w="17" h="23"></ui-icon></div>`);

define('tool-bar',`:host{display:flex;height:51px;background:#fff;border-bottom:1px solid #e0e0e0;align-items:center;color:#3a3a3a}
.c{display:flex;align-items:center;height:50px;border-right:1px solid #e2e2e2;flex:none}
.tg{width:40px;height:20px;border-radius:10px;background:#747474;padding:4px 0 0 4px;margin-left:20px}.tg i{display:block;width:12.500px;height:12.500px;border-radius:50%;background:#fff}
.l{color:#1f57a4}fit-text.l{color:#2d61a9}.g{flex:1}`,
`<div class="c" style="width:61px;padding-left:19.500px"><ui-icon name="chat" w="20" h="18"></ui-icon></div>
<div class="c" style="width:125px"><div class="tg"><i></i></div><fit-text w="30" s="18" style="margin:1px 0 0 15px;color:#424549">Edit</fit-text></div>
<div class="c" style="width:67px;padding-left:9px"><ui-icon name="save" w="18" h="17"></ui-icon><ui-icon name="chev" w="13" h="8" style="margin-left:18px"></ui-icon></div>
<div class="c" style="width:50px;padding-left:15.500px"><ui-icon name="share" w="18" h="19"></ui-icon></div>
<div class="c" style="width:99px;padding-left:17px;color:#a4a4a4"><ui-icon name="undo" w="17" h="13"></ui-icon><ui-icon name="redo" w="17" h="13" style="margin-left:31px"></ui-icon></div>
<ui-icon name="expand" w="19" h="18" style="margin-left:15.500px"></ui-icon><div class="g"></div>
<fit-text class="l" w="72" s="17.500">Analytics</fit-text><ui-icon class="l" name="line" w="19" h="18" style="margin-left:11px"></ui-icon><fit-text class="l" w="49.500" s="17.500" style="margin-left:33px">Filters</fit-text><ui-icon class="l" name="filter" w="18" h="16" style="margin:0 17px 0 12px"></ui-icon>`);

define('side-rail',`:host{display:flex;flex-direction:column;width:60px;flex:none;background:#e9e9e9;color:#1d3457;padding:19px 0 0 18px}`,
`<ui-icon name="pin" w="22" h="22" style="margin-left:.500px"></ui-icon><ui-icon name="bars" w="23" h="23" style="margin-top:38px"></ui-icon><ui-icon name="tools" w="23" h="22" style="margin-top:34px"></ui-icon><ui-icon name="anim" w="23" h="23" style="margin-top:34px"></ui-icon>`);

const X0=57.500,Y0=117.300;
let grid='',bub='';
for(let i=1;i<=9;i++){const x=(X0+118.600*i).toFixed(2);grid+=`<path d="M${x} ${Y0}V657"/>`}
for(let i=0;i<10;i++){const y=(144.500+53.910*i).toFixed(2);grid+=`<path d="M${X0} ${y}H1125"/>`}
[[758.700,4.300],[826,6.300],[874,7.500],[902,8],[1035.900,11.600],[1222,16.600],[1375.200,20.700],[1592,26.600],[1599.600,26.800],[1738.800,30.500]].forEach((b,i)=>bub+=`<circle cx="${b[0]-662}" cy="${144.500+53.910*i}" r="${b[1]}"/>`);
define('bubble-chart',`:host{display:block;width:1153px;height:715px;background:#fff;flex:none;margin-left:28px}
.w{display:grid;width:1153px;height:715px}.w>*{grid-area:1/1}
.o{display:flex;flex-direction:column;padding:0 0 0 27px;color:#3a3a3a}
.r{display:flex;height:24px}.n{display:flex;justify-content:space-between;width:136px;color:#5a5a5a}`,
`<div class="w"><svg width="1153" height="715" viewBox="0 0 1153 715"><defs><clipPath id="k"><rect x="57" y="110" width="1080" height="547"/></clipPath></defs>
<g stroke="#e2e2e2" stroke-width="1.300" fill="none">${grid}<path d="M${X0} ${Y0}H1125" stroke="#ececec"/></g>
<path d="M57.500 ${Y0}V657" stroke="#a8a8a8"/><path d="M57 657H1125" stroke="#c6c6c6" stroke-width="1.400"/>
<g fill="#6929c4" fill-opacity=".4" stroke="#6929c4" stroke-width="1.200" clip-path="url(#k)">${bub}</g>
<path d="M32 63.500L152 53v23H32z" fill="#e0e0e0"/><ellipse cx="32.500" cy="69" rx="5.500" ry="6" fill="#8d8d8d"/><circle cx="152.300" cy="64.500" r="11.500" fill="#8d8d8d"/></svg>
<div class="o"><div class="r"><fit-text w="343.500" s="16.500" style="margin:-7px 0 0 -4.500px">gross income by Date sized by gross income</fit-text><ui-icon name="fdot" w="16" h="18" style="margin:-3.500px 0 0 717.500px;color:#161616"></ui-icon><ui-icon name="burst" w="19" h="20" style="margin:-4px 0 0 12.500px;color:#161616"></ui-icon></div>
<fit-text w="132.500" s="14.500" style="margin:4px 0 0 .500px">gross income (Sum)</fit-text>
<div class="n" style="margin-top:33px"><fit-text w="32.500" s="10.500">273.35</fit-text><fit-text w="32.500" s="10.500">355.91</fit-text></div></div></div>`);

define('story-view',`:host{display:flex;flex:1;background:#f3f3f3;overflow:hidden;min-width:0}
.l{width:574px;padding:0 0 0 62px;flex:none;color:#262626}
.m{display:flex;flex-direction:column;flex:1}.row{display:flex}
.tab{position:absolute;left:967px;top:933px;width:47px;height:40px;background:#fff;border:1px solid #c6c6c6;display:flex;justify-content:center;padding-top:6px;z-index:2;color:#3a3a3a}
.sb{width:21px;background:#f0f0f0;display:flex;flex-direction:column;align-items:center}
.th{width:17px;height:523px;background:#c1c1c1;margin-top:213px}`,
`<div class="m"><div class="row"><div class="l"><fit-text w="484" s="24.500" style="margin-top:-24px;line-height:32.500px">The total number of results for Date, across</fit-text><fit-text w="281.500" s="24.500" style="line-height:32.500px">all gross incomes, is 168.</fit-text></div><bubble-chart></bubble-chart></div></div>
<div class="tab"><ui-icon name="book" w="16" h="18" style="margin-left:-2px"></ui-icon></div>
<div class="sb"><ui-icon name="up" w="10" h="6" style="margin-top:8px"></ui-icon><div class="th"></div><ui-icon name="down" w="10" h="6" style="margin-top:7px"></ui-icon></div>`);

define('play-bar',`:host{display:flex;height:49px;background:#fff;border-top:1px solid #d4d4d4;align-items:center;color:#1f57a4;padding:0 0 0 15px;flex:none}
.s{width:1px;height:48px;background:#d9d9d9;flex:none}.k{color:#2b2b2b}.l{color:#2d61a9}
.tr{width:1148px;height:18px;margin-left:22px;display:flex;align-items:center;flex:none}
.a{width:185px;height:3px;background:#333}.b{width:18px;height:17px;border-radius:50%;background:#333}.c{flex:1;height:3px;background:#d8d8d8}`,
`<fit-text class="l" w="87" s="17.500">Prev scene</fit-text><ui-icon name="prev" w="17" h="16" style="margin-left:29.500px"></ui-icon><ui-icon name="pause" w="14" h="14" style="margin-left:33px"></ui-icon><ui-icon name="next" w="17" h="16" style="margin-left:32px"></ui-icon><fit-text class="l" w="89" s="17.500" style="margin-left:30px">Next scene</fit-text><div class="s" style="margin-left:15px"></div>
<fit-text class="k" w="85" s="14.500" style="margin:1px 0 0 10.500px">Scene 7 of 8</fit-text><div class="s" style="margin-left:11px"></div><fit-text class="k" w="44" s="14.500" style="margin:1px 0 0 22px">0:00.9</fit-text>
<div class="tr"><div class="a"></div><div class="b"></div><div class="c"></div></div><fit-text class="k" w="44" s="14.500" style="margin:1px 0 0 12px">0:05.0</fit-text><div class="s" style="margin-left:33px"></div><ui-icon class="k" name="settings" w="18" h="18" style="margin-left:14px"></ui-icon>`);

define('task-item',`:host{display:flex;width:55px;height:60px;align-items:center;justify-content:center;flex:none;position:relative}
.p{display:flex;width:50px;height:50px;border-radius:6px;align-items:center;justify-content:center}
:host([hot]) .p{background:rgba(255,255,255,.07);box-shadow:inset 0 0 0 1px rgba(255,255,255,.06)}
:host([warn]) .p{background:#45282a}
.d{position:absolute;left:23px;top:50px;width:8px;height:4px;border-radius:2px;background:#9b93a5;display:none}
:host([run]) .d{display:block}:host([hot]) .d{display:block;width:20px;left:17.500px;background:#e09be6}:host([warn]) .d{background:#ff9a9a}
::slotted(b){position:absolute;top:7px;left:28.500px;width:20px;height:20px;border-radius:50%;background:#dc9fe4;color:#201028;font:13px/20px ${SEGOE};text-align:center}
:host([hot]) ::slotted(b){background:#00569c;color:#fff}`,
`<div class="p"><slot></slot></div><div class="d"></div>`);

define('task-bar',`:host{display:flex;height:60px;align-items:center;flex:none;color:#fff;border-top:1px solid #4a4d52;background:linear-gradient(90deg,#1c2423 0,#1b2323 420px,#16282a 560px,#13283a 660px,#142650 760px,#24204a 850px,#2b2042 930px,#2c1c48 1090px,#2b1168 1180px,#2f1061 1300px,#32114e 1400px,#31163f 1500px,#2b1a38 1700px,#241c32 1920px)}
.w{margin:-1px 0 0 10.500px}.q{width:275px;height:40px;flex:none;border-radius:20px;background:rgba(255,255,255,.14);border:1px solid rgba(255,255,255,.13);margin:0 2.500px 0 17.500px;display:flex;align-items:center;padding-left:14px;color:#eee}
.col{display:flex;flex-direction:column;align-items:flex-end;margin-top:-1px}.n{width:20px;height:20px;flex:none;border-radius:50%;background:#dc9fe4;color:#201028;font:13px/20px ${SEGOE};text-align:center;margin-left:9px}`,
`<ui-icon name="moon" w="29" h="29" style="margin:-2px 0 0 24.500px"></ui-icon><div class="w"><fit-text ui w="31.500" s="14.500" style="line-height:20px">27°C</fit-text><fit-text ui w="81" s="14.500" style="color:#c4c7c7;line-height:20px">Mostly clear</fit-text></div>
<ui-icon name="win" w="29" h="29" style="margin-left:301.500px"></ui-icon>
<div class="q"><ui-icon name="search" w="18" h="18"></ui-icon><fit-text ui w="51" s="16.500" style="margin-left:13px;color:#d5dadb">Search</fit-text><ui-icon name="jelly" w="62" h="31" style="margin-left:109px"></ui-icon></div>`+
[['task',30,28,''],['teams',29,29,''],['folder',30,28,'run'],['edge',30,30,'run'],['store',29,30,''],['gem',26,28,''],['chrome',30,30,'hot','P'],['ma',30,30,''],['figma',30,30,''],['spotify',30,30,'run'],['timer',30,30,'warn run'],['whatsapp',30,30,'run','7'],['photos',27,27,'run']].map(a=>`<task-item ${a[3]}><ui-icon name="${a[0]}" w="${a[1]}" h="${a[2]}"></ui-icon>${a[4]?`<b>${a[4]}</b>`:''}</task-item>`).join('')+
`<ui-icon name="caret" w="14" h="9" style="margin-left:30px"></ui-icon><ui-icon name="cloud" w="21" h="18" style="margin-left:23px"></ui-icon><ui-icon name="mic" w="14" h="20" style="margin-left:22px"></ui-icon>
<div class="col" style="align-items:center;margin-left:27px"><fit-text ui w="28.500" s="14.500" style="line-height:20px">ENG</fit-text><fit-text ui w="15" s="14.500" style="line-height:20px">IN</fit-text></div>
<ui-icon name="wifi" w="20" h="15" style="margin-left:23px"></ui-icon><ui-icon name="vol" w="20" h="17" style="margin-left:10px"></ui-icon><ui-icon name="batt" w="20" h="13" style="margin-left:10px"></ui-icon>
<div class="col" style="margin-left:20px"><fit-text ui w="36.500" s="14.500" style="line-height:20px">23:40</fit-text><fit-text ui w="78" s="14.500" style="line-height:20px">24-04-2023</fit-text></div><div class="n">7</div>`);

define('app-desktop',`:host{display:flex;flex-direction:column;width:1920px;height:1080px;overflow:hidden}
.b{display:flex;flex:1;min-height:0}.m{display:flex;flex-direction:column;flex:1;min-width:0}story-view{min-height:0}`,
`<browser-tabs></browser-tabs><address-bar></address-bar><app-header></app-header><tool-bar></tool-bar><div class="b"><side-rail></side-rail><div class="m"><story-view></story-view><play-bar></play-bar></div></div><task-bar></task-bar>`);
</script>
</body>
</html>
